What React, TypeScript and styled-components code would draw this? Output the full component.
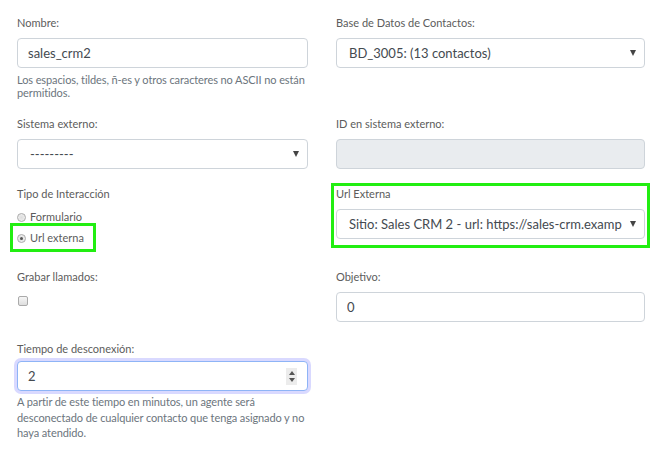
import React from "react";
import styled, { createGlobalStyle } from "styled-components";

const Global = createGlobalStyle`
  html, body { margin: 0; padding: 0; background: #fff; }
  body { font-family: Lato, "Open Sans", sans-serif; color: #495057; }
  * { box-sizing: border-box; }
`;

const Page = styled.div`
  padding: 15px 0 0 17px;
  width: 664px;
`;

const Row = styled.div<{ $mb?: number }>`
  display: grid;
  grid-template-columns: 291px 309px;
  column-gap: 28px;
  align-items: start;
  margin-bottom: ${(p) => p.$mb ?? 17}px;
`;

const Group = styled.div`
  display: flex;
  flex-direction: column;
`;

const Label = styled.div<{ $gap?: number }>`
  font-size: 11px;
  line-height: 16px;
  color: #5c5c5c;
  margin-bottom: ${(p) => p.$gap ?? 7}px;
`;

const Control = styled.div<{ $disabled?: boolean; $focus?: boolean }>`
  height: 30px;
  border: 1px solid ${(p) => (p.$focus ? "#8eb4f6" : "#ced4da")};
  border-radius: 4px;
  background: ${(p) => (p.$disabled ? "#e9ecef" : "#fff")};
  box-shadow: ${(p) => (p.$focus ? "0 0 0 3px rgba(120,120,255,0.28)" : "none")};
  display: flex;
  align-items: center;
  padding: 0 10px 0 10px;
  font-size: 13px;
  color: #444a50;
`;

const SelectBox = styled(Control)`
  padding: 0 8px 0 12px;
`;

const Value = styled.span`
  flex: 1;
  min-width: 0;
  white-space: nowrap;
  overflow: hidden;
`;

const Arrow = styled.span`
  width: 0;
  height: 0;
  border-left: 3.5px solid transparent;
  border-right: 3.5px solid transparent;
  border-top: 6px solid #444;
  margin-left: 8px;
`;

const Help = styled.div<{ $lh?: number }>`
  font-size: 11px;
  letter-spacing: -0.1px;
  line-height: ${(p) => p.$lh ?? 13}px;
  color: #6c757d;
  margin-top: ${(p) => (p.$lh ? 3 : 5)}px;
`;

const Highlight = styled.div`
  border: 3px solid #22ee11;
  margin: -3px -5px -9px -5px;
  padding: 0 2px 6px 2px;
`;

const RadioList = styled.div`
  display: flex;
  flex-direction: column;
  margin-top: 6px;
`;

const RadioRow = styled.div`
  display: flex;
  align-items: center;
  font-size: 11px;
  line-height: 16px;
  color: #5c5c5c;
  height: 18px;
`;

const RadioHighlight = styled.div`
  align-self: flex-start;
  border: 3px solid #22ee11;
  margin: -3px 0 0 -7px;
  padding: 3px 9px 2px 4px;
`;

const RadioDot = styled.span<{ $checked?: boolean }>`
  width: 9px;
  height: 9px;
  border-radius: 50%;
  border: 1px solid #aaa;
  background: radial-gradient(circle, #ddd 0, #f3f3f3 100%);
  margin-right: 4px;
  display: inline-flex;
  align-items: center;
  justify-content: center;
  &::after {
    content: "";
    width: 3px;
    height: 3px;
    border-radius: 50%;
    background: ${(p) => (p.$checked ? "#555" : "transparent")};
  }
`;

const Check = styled.span`
  display: block;
  width: 10px;
  height: 10px;
  border: 1px solid #aaa;
  border-radius: 2px;
  background: linear-gradient(#f6f6f6, #dedede);
  margin: 5px 0 0 1px;
`;

const Spinner = styled.span`
  width: 11px;
  height: 17px;
  background: #ececec;
  display: flex;
  flex-direction: column;
  align-items: center;
  justify-content: center;
  gap: 3px;
`;

const Tri = styled.span<{ $up?: boolean }>`
  width: 0;
  height: 0;
  border-left: 3px solid transparent;
  border-right: 3px solid transparent;
  ${(p) => (p.$up ? "border-bottom: 4px solid #555;" : "border-top: 4px solid #555;")}
`;

export default function App() {
  return (
    <>
      <Global />
      <Page>
        <Row>
          <Group>
            <Label>Nombre:</Label>
            <Control>
              <Value>sales_crm2</Value>
            </Control>
            <Help>
              Los espacios, tildes, ñ-es y otros caracteres no ASCII no están permitidos.
            </Help>
          </Group>
          <Group>
            <Label>Base de Datos de Contactos:</Label>
            <SelectBox>
              <Value>BD_3005: (13 contactos)</Value>
              <Arrow />
            </SelectBox>
          </Group>
        </Row>
        <Row>
          <Group>
            <Label>Sistema externo:</Label>
            <SelectBox>
              <Value>---------</Value>
              <Arrow />
            </SelectBox>
          </Group>
          <Group>
            <Label>ID en sistema externo:</Label>
            <Control $disabled />
          </Group>
        </Row>
        <Row>
          <Group>
            <Label $gap={0}>Tipo de Interacción</Label>
            <RadioList>
              <RadioRow>
                <RadioDot />
                Formulario
              </RadioRow>
              <RadioHighlight>
                <RadioRow>
                  <RadioDot $checked />
                  Url externa
                </RadioRow>
              </RadioHighlight>
            </RadioList>
          </Group>
          <Highlight>
            <Group>
              <Label>Url Externa</Label>
              <SelectBox>
                <Value>Sitio: Sales CRM 2 - url: https://sales-crm.example.com/</Value>
                <Arrow />
              </SelectBox>
            </Group>
          </Highlight>
        </Row>
        <Row $mb={19}>
          <Group>
            <Label $gap={6}>Grabar llamados:</Label>
            <Check />
          </Group>
          <Group>
            <Label>Objetivo:</Label>
            <Control>
              <Value>0</Value>
            </Control>
          </Group>
        </Row>
        <Row>
          <Group>
            <Label $gap={4}>Tiempo de desconexión:</Label>
            <Control $focus>
              <Value>2</Value>
              <Spinner>
                <Tri $up />
                <Tri />
              </Spinner>
            </Control>
            <Help $lh={15.5}>
              A partir de este tiempo en minutos, un agente será desconectado de cualquier contacto que tenga asignado y no haya atendido.
            </Help>
          </Group>
          <div />
        </Row>
      </Page>
    </>
  );
}
